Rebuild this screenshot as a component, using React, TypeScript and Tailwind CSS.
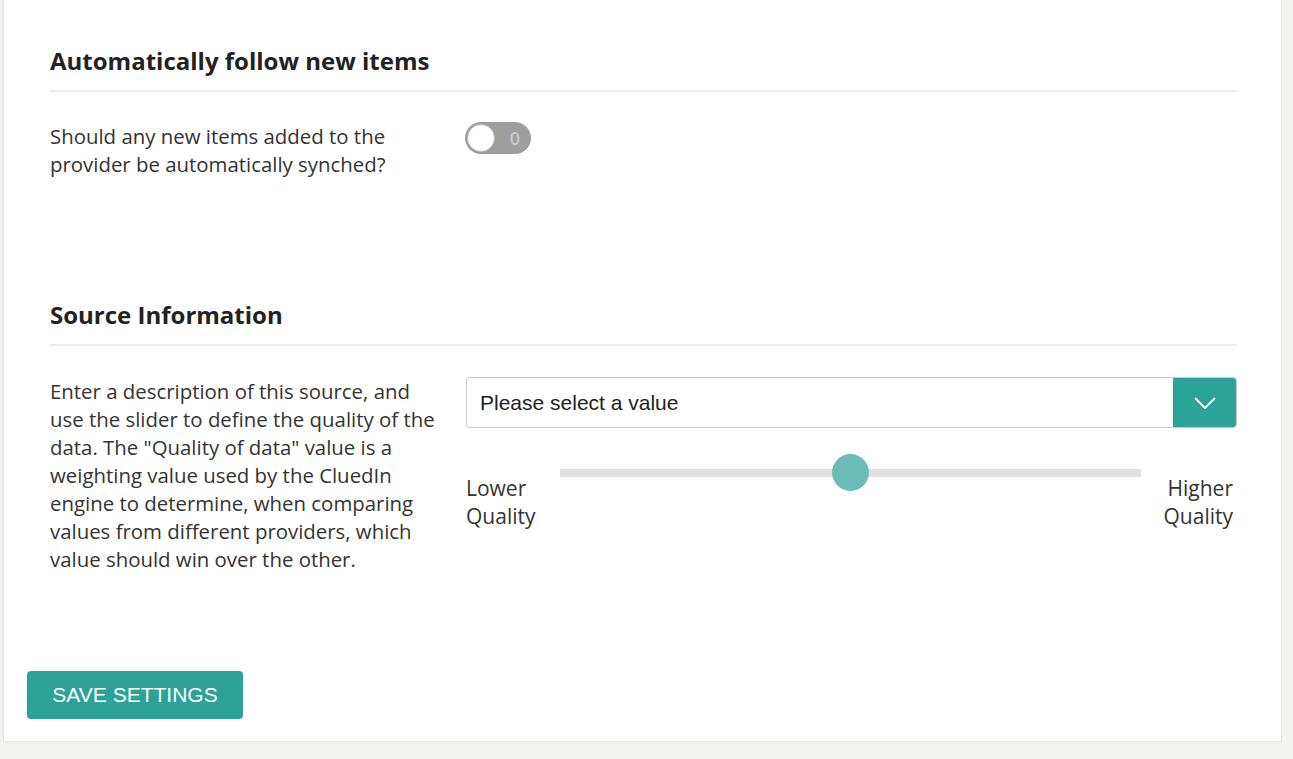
import { useState } from 'react';

const body = { fontFamily: '"Open Sans", sans-serif' };
const arial = { fontFamily: '"Liberation Sans", Arial, sans-serif' };

const SectionTitle = ({ children }: { children: string }) => (
  <div className="pl-[46px] pr-[44px]">
    <h2 className="text-[24px] leading-[30px] font-bold text-[#222]">{children}</h2>
    <div className="mt-[14px] h-[2px] bg-[#ececec]" />
  </div>
);

const App = () => {
  const [follow, setFollow] = useState(false);
  const [quality] = useState(50);

  return (
    <div className="min-h-[759px] bg-[#f2f2f1] pl-[3px]" style={body}>
      <div className="w-[1279px] h-[742px] bg-white border border-[#e6e6e6] border-t-0 flex flex-col">
        <div className="pt-[46px]">
          <SectionTitle>Automatically follow new items</SectionTitle>
          <div className="mt-[30px] pl-[46px] flex">
            <p className="w-[416px] pr-[24px] text-[20.4px] leading-[28px] text-[#333]">
              Should any new items added to the provider be automatically synched?
            </p>
            <button
              onClick={() => setFollow(!follow)}
              className="relative w-[66px] h-[32px] -ml-[1px] rounded-full bg-[#9e9e9e] flex items-center"
            >
              <span className="absolute left-[2px] top-[2px] w-[28px] h-[28px] rounded-full bg-white border border-[#bdbdbd]" />
              <span className="absolute right-[11px] text-[18px] font-semibold text-[#c9c9c9]">0</span>
            </button>
          </div>
        </div>

        <div className="mt-[122px]">
          <SectionTitle>Source Information</SectionTitle>
          <div className="mt-[30px] pl-[46px] pr-[44px] flex">
            <p className="w-[416px] pr-[24px] pt-[1px] text-[20.4px] leading-[28px] text-[#333]">
              Enter a description of this source, and use the slider to define the quality of the data. The "Quality of data" value is a weighting value used by the CluedIn engine to determine, when comparing values from different providers, which value should win over the other.
            </p>
            <div className="flex-1 pt-[1px]">
              <div className="flex h-[51px] border border-[#cccccc] rounded-[4px] overflow-hidden">
                <div className="flex-1 flex items-center pl-[13px] text-[21px] text-[#222]" style={arial}>
                  Please select a value
                </div>
                <div className="w-[63px] bg-[#2ca397] flex items-center justify-center">
                  <svg width="22" height="12" viewBox="0 0 22 12" fill="none">
                    <path d="M1 1l10 10L21 1" stroke="white" strokeWidth="1.8" />
                  </svg>
                </div>
              </div>
              <div className="mt-[26px] flex items-start text-[21px] leading-[28px] text-[#333]">
                <div className="w-[94px] pt-[20px]">Lower<br />Quality</div>
                <div className="relative w-[581px] h-[37px] flex items-center">
                  <div className="w-full h-[8px] bg-[#e0e0e0]" />
                  <div
                    className="absolute top-0 w-[37px] h-[37px] rounded-full bg-[#6bbbb6]"
                    style={{ left: `calc(${quality}% - 19px)` }}
                  />
                </div>
                <div className="flex-1 pt-[20px] text-right pr-[4px]">Higher<br />Quality</div>
              </div>
            </div>
          </div>
        </div>

        <div className="mt-auto mb-[22px] pl-[23px]">
          <button
            className="w-[216px] h-[48px] rounded-[4px] bg-[#2ca397] text-white text-[21px] uppercase"
            style={arial}
          >
            Save Settings
          </button>
        </div>
      </div>
    </div>
  );
};

export default App;
